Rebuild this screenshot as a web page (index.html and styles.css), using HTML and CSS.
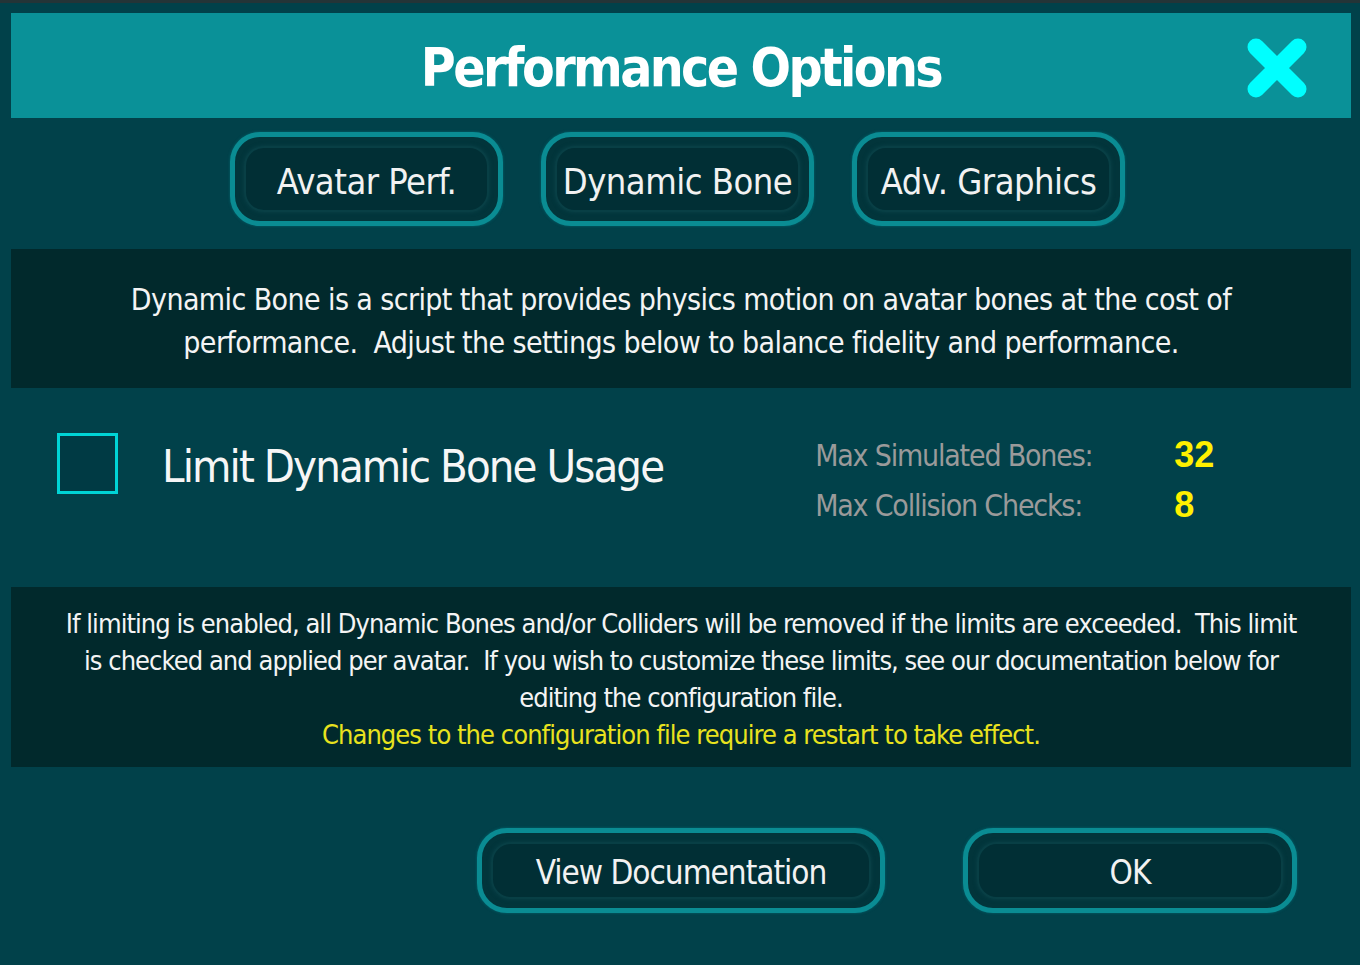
FILE: index.html
```html
<!DOCTYPE html>
<html>
<head>
<meta charset="utf-8">
<link rel="stylesheet" href="styles.css">
</head>
<body>
<div class="window">
  <header class="titlebar">
    <h1 class="title">Performance Options</h1>
    <button class="close" aria-label="Close">
      <svg width="62" height="62" viewBox="0 0 62 62"><path d="M10 10 L52 52 M52 10 L10 52" stroke="#00ffff" stroke-width="17" stroke-linecap="round" fill="none"/></svg>
    </button>
  </header>

  <nav class="tabs">
    <div class="btn tab"><span class="btn-inner">Avatar Perf.</span></div>
    <div class="btn tab"><span class="btn-inner">Dynamic Bone</span></div>
    <div class="btn tab"><span class="btn-inner">Adv. Graphics</span></div>
  </nav>

  <section class="panel desc">
    <p>Dynamic Bone is a script that provides physics motion on avatar bones at the cost of<br>performance.&nbsp; Adjust the settings below to balance fidelity and performance.</p>
  </section>

  <section class="settings">
    <div class="check-row">
      <span class="checkbox"></span>
      <span class="check-label">Limit Dynamic Bone Usage</span>
    </div>
    <div class="stats">
      <div class="stat"><span class="stat-label">Max Simulated Bones:</span><span class="stat-value">32</span></div>
      <div class="stat"><span class="stat-label">Max Collision Checks:</span><span class="stat-value">8</span></div>
    </div>
  </section>

  <section class="panel info">
    <p>If limiting is enabled, all Dynamic Bones and/or Colliders will be removed if the limits are exceeded.&nbsp; This limit<br>is checked and applied per avatar.&nbsp; If you wish to customize these limits, see our documentation below for<br>editing the configuration file.</p>
    <p class="warn">Changes to the configuration file require a restart to take effect.</p>
  </section>

  <footer class="actions">
    <div class="btn doc"><span class="btn-inner">View Documentation</span></div>
    <div class="btn ok"><span class="btn-inner">OK</span></div>
  </footer>
</div>
</body>
</html>
```

FILE: styles.css
```css
* { box-sizing: border-box; }
html, body {
  margin: 0;
  padding: 0;
  width: 1360px;
  height: 965px;
  overflow: hidden;
  background: #01404a;
}
body {
  font-family: "DejaVu Sans", "Liberation Sans", sans-serif;
  font-stretch: condensed;
  color: #f4f4f4;
  border-top: 3px solid #243437;
}
.window {
  display: flex;
  flex-direction: column;
  padding: 10px 9px 0 11px;
  background: #01414a;
  height: 962px;
}
.titlebar {
  height: 105px;
  background: #0a9198;
  display: flex;
  align-items: center;
  justify-content: center;
  position: relative;
}
.title {
  margin: 0;
  font-size: 53px;
  font-weight: bold;
  letter-spacing: -2.6px;
  color: #ffffff;
  padding-top: 4px;
}
.close {
  position: absolute;
  right: 43px;
  top: 24px;
  background: none;
  border: 0;
  padding: 0;
  width: 62px;
  height: 62px;
}
.close svg { display: block; }

.tabs {
  display: flex;
  justify-content: center;
  gap: 38px;
  margin-top: 14px;
  padding-right: 7px;
}
.btn {
  display: flex;
  border: 5px solid #0a8c93;
  border-radius: 30px;
  background: #02353b;
  box-shadow: 0 0 3px rgba(10,140,147,0.5);
}
.btn-inner {
  flex: 1;
  margin: 9px;
  border: 2px solid #083f45;
  border-radius: 20px;
  background: #012f35;
  display: flex;
  align-items: center;
  justify-content: center;
  color: #f2f2f2;
  box-shadow: 0 0 4px #0a434a;
  padding-top: 4px;
}
.tab {
  width: 273px;
  height: 94px;
  font-size: 36px;
  letter-spacing: -0.5px;
}

.panel {
  background: #01292c;
  text-align: center;
}
.panel p { margin: 0; }
.desc {
  margin-top: 23px;
  height: 139px;
  font-size: 30px;
  line-height: 43px;
  letter-spacing: -0.6px;
  padding-top: 29px;
}

.settings {
  height: 199px;
  display: flex;
  align-items: flex-start;
}
.check-row {
  display: flex;
  align-items: center;
  margin-left: 46px;
  margin-top: 45px;
}
.checkbox {
  width: 61px;
  height: 61px;
  border: 3px solid #00d4d6;
  background: #003a44;
}
.check-label {
  margin-left: 44px;
  font-size: 45px;
  letter-spacing: -1.9px;
  color: #f6f6f6;
  padding-top: 6px;
}
.stats {
  margin-left: 152px;
  margin-top: 44px;
  display: flex;
  flex-direction: column;
  gap: 4px;
}
.stat {
  display: flex;
  align-items: center;
  height: 46px;
}
.stat-label {
  width: 359px;
  font-size: 30px;
  letter-spacing: -1.2px;
  color: #9a9a9a;
}
.stat-value {
  font-family: "Liberation Sans", sans-serif;
  font-stretch: normal;
  font-weight: bold;
  font-size: 36px;
  color: #fff000;
}

.info {
  height: 180px;
  font-size: 27px;
  line-height: 37px;
  letter-spacing: -0.95px;
  padding-top: 18px;
}
.info .warn { color: #e8e21e; }

.actions {
  display: flex;
  gap: 78px;
  margin-top: 61px;
  padding-left: 466px;
}
.doc, .ok {
  height: 85px;
  font-size: 33px;
  letter-spacing: -1px;
}
.doc { width: 408px; }
.ok { width: 334px; }
```
